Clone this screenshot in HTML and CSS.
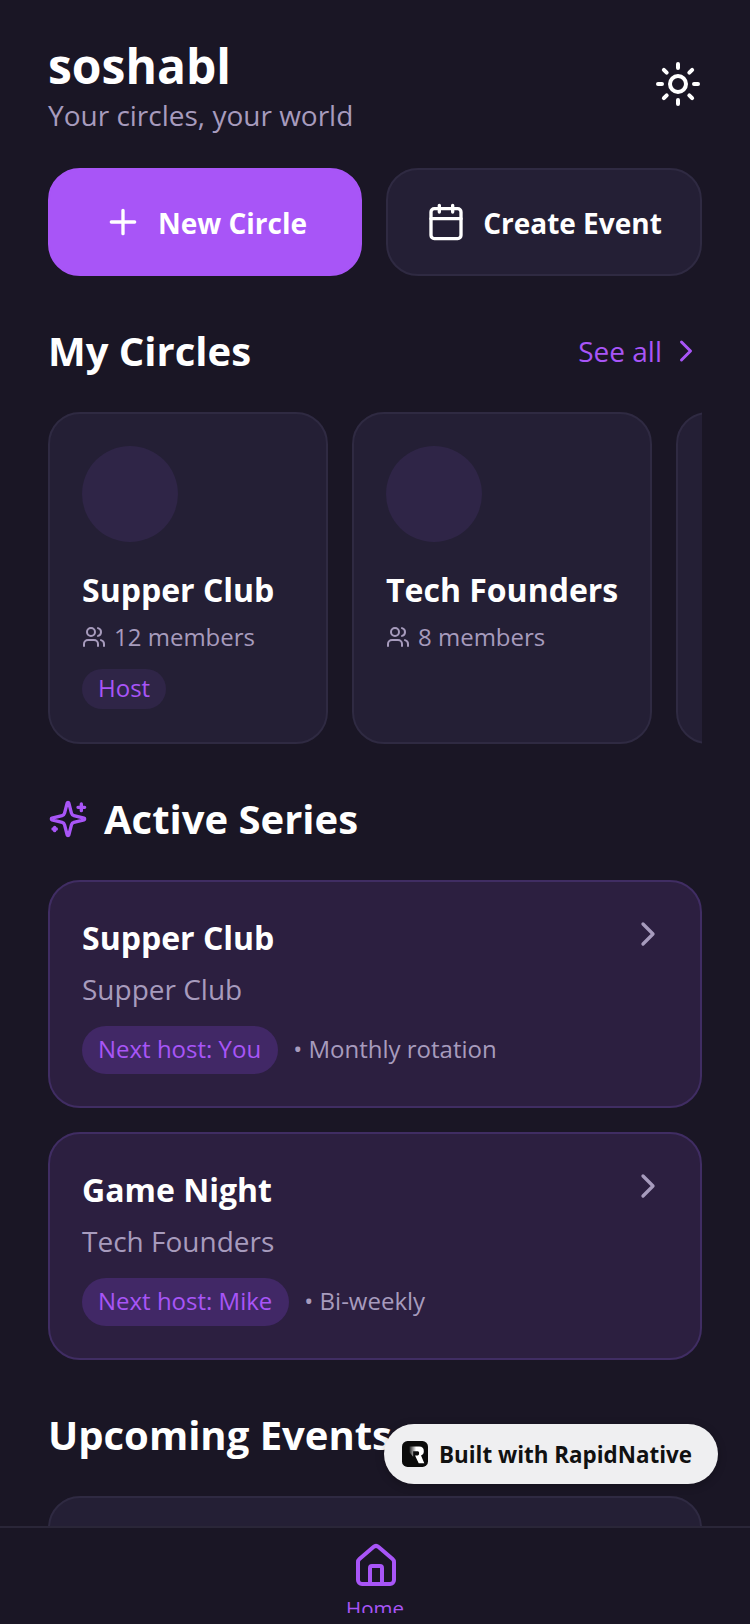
FILE: index.html
```html
<!DOCTYPE html>
<html lang="en">
<head>
  <meta charset="UTF-8" />
  <meta name="viewport" content="width=device-width, initial-scale=1.0" />
  <title>soshabl</title>
  <link rel="stylesheet" href="styles.css">
</head>
<body>
  <div class="app">
    <main class="content">
      <header class="top">
        <div>
          <h1 class="brand">soshabl</h1>
          <p class="tagline">Your circles, your world</p>
        </div>
        <svg class="sun" viewBox="0 0 24 24" fill="none" stroke="#fff" stroke-width="2" stroke-linecap="round">
          <circle cx="12" cy="12" r="4"/>
          <path d="M12 2v2M12 20v2M4.93 4.93l1.41 1.41M17.66 17.66l1.41 1.41M2 12h2M20 12h2M6.34 17.66l-1.41 1.41M19.07 4.93l-1.41 1.41"/>
        </svg>
      </header>

      <div class="actions">
        <button class="btn btn-primary">
          <svg class="btn-icon" viewBox="0 0 24 24" fill="none" stroke="#fff" stroke-width="2" stroke-linecap="round"><path d="M5 12h14M12 5v14"/></svg>
          <span>New Circle</span>
        </button>
        <button class="btn btn-dark">
          <svg class="btn-icon" viewBox="0 0 24 24" fill="none" stroke="#fff" stroke-width="2" stroke-linecap="round" stroke-linejoin="round"><path d="M8 2v4M16 2v4"/><rect x="3" y="4" width="18" height="18" rx="2"/><path d="M3 10h18"/></svg>
          <span>Create Event</span>
        </button>
      </div>

      <section class="section-head">
        <h2>My Circles</h2>
        <a class="see-all">See all
          <svg class="see-icon" viewBox="0 0 24 24" fill="none" stroke="#a855f7" stroke-width="2" stroke-linecap="round" stroke-linejoin="round"><path d="m9 18 6-6-6-6"/></svg>
        </a>
      </section>

      <div class="circles">
        <div class="circle-card">
          <div class="avatar"></div>
          <h3>Supper Club</h3>
          <p class="members">
            <svg class="members-icon" viewBox="0 0 24 24" fill="none" stroke="#a79bbd" stroke-width="2" stroke-linecap="round" stroke-linejoin="round"><path d="M16 21v-2a4 4 0 0 0-4-4H6a4 4 0 0 0-4 4v2"/><circle cx="9" cy="7" r="4"/><path d="M22 21v-2a4 4 0 0 0-3-3.87M16 3.13a4 4 0 0 1 0 7.75"/></svg>
            12 members
          </p>
          <span class="tag tag-small">Host</span>
        </div>
        <div class="circle-card circle-wide">
          <div class="avatar"></div>
          <h3>Tech Founders</h3>
          <p class="members">
            <svg class="members-icon" viewBox="0 0 24 24" fill="none" stroke="#a79bbd" stroke-width="2" stroke-linecap="round" stroke-linejoin="round"><path d="M16 21v-2a4 4 0 0 0-4-4H6a4 4 0 0 0-4 4v2"/><circle cx="9" cy="7" r="4"/><path d="M22 21v-2a4 4 0 0 0-3-3.87M16 3.13a4 4 0 0 1 0 7.75"/></svg>
            8 members
          </p>
        </div>
        <div class="circle-card"></div>
      </div>

      <section class="series-head">
        <svg class="spark" viewBox="0 0 24 24" fill="none" stroke="#a855f7" stroke-width="2" stroke-linecap="round" stroke-linejoin="round"><path d="M9.94 15.5A2 2 0 0 0 8.5 14.06l-6.14-1.58a.5.5 0 0 1 0-.96L8.5 9.94A2 2 0 0 0 9.94 8.5l1.58-6.14a.5.5 0 0 1 .96 0l1.58 6.14a2 2 0 0 0 1.44 1.44l6.14 1.58a.5.5 0 0 1 0 .96l-6.14 1.58a2 2 0 0 0-1.44 1.44l-1.58 6.14a.5.5 0 0 1-.96 0z"/><path d="M20 3v4M22 5h-4M4 17v2M5 18H3"/></svg>
        <h2>Active Series</h2>
      </section>

      <div class="series-list">
        <div class="series-card">
          <div class="series-body">
            <h3>Supper Club</h3>
            <p class="series-sub">Supper Club</p>
            <div class="series-meta">
              <span class="tag">Next host: You</span>
              <span class="series-note">• Monthly rotation</span>
            </div>
          </div>
          <svg class="series-arrow" viewBox="0 0 24 24" fill="none" stroke="#a79bbd" stroke-width="2" stroke-linecap="round" stroke-linejoin="round"><path d="m9 18 6-6-6-6"/></svg>
        </div>
        <div class="series-card">
          <div class="series-body">
            <h3>Game Night</h3>
            <p class="series-sub">Tech Founders</p>
            <div class="series-meta">
              <span class="tag">Next host: Mike</span>
              <span class="series-note">• Bi-weekly</span>
            </div>
          </div>
          <svg class="series-arrow" viewBox="0 0 24 24" fill="none" stroke="#a79bbd" stroke-width="2" stroke-linecap="round" stroke-linejoin="round"><path d="m9 18 6-6-6-6"/></svg>
        </div>
      </div>

      <h2 class="upcoming">Upcoming Events</h2>
      <div class="event-card"></div>
    </main>

    <nav class="tabbar">
      <div class="tab">
        <svg class="tab-icon" viewBox="0 0 24 24" fill="none" stroke="#a855f7" stroke-width="2" stroke-linecap="round" stroke-linejoin="round"><path d="M15 21v-8a1 1 0 0 0-1-1h-4a1 1 0 0 0-1 1v8"/><path d="M3 10a2 2 0 0 1 .71-1.53l7-6a2 2 0 0 1 2.58 0l7 6A2 2 0 0 1 21 10v9a2 2 0 0 1-2 2H5a2 2 0 0 1-2-2z"/></svg>
        <span class="tab-label">Home</span>
      </div>
    </nav>

    <div class="built">
      <svg class="built-logo" viewBox="0 0 28 28">
        <defs>
          <linearGradient id="logoFade" x1="0" y1="0" x2="1" y2="0">
            <stop offset="0" stop-color="#fff" stop-opacity="0.1"/>
            <stop offset="0.45" stop-color="#fff"/>
          </linearGradient>
        </defs>
        <rect width="28" height="28" rx="6" fill="#0b0b0b"/>
        <path d="M8 6H18.500Q23.500 6 23.500 11Q23.500 14.500 20.500 15.500L24 24H18L14 15.500H17Q18.500 15.500 18.500 13Q18.500 11 17 11H12V17L8 12z" fill="url(#logoFade)"/>
      </svg>
      <span>Built with RapidNative</span>
    </div>
  </div>
</body>
</html>
```

FILE: styles.css
```css
* {
  margin: 0;
  padding: 0;
  box-sizing: border-box;
  font-family: 'Open Sans', sans-serif;
}

body {
  background: #1a1625;
}

.app {
  position: relative;
  width: 750px;
  height: 1624px;
  overflow: hidden;
  display: flex;
  flex-direction: column;
  background: #1a1625;
}

.content {
  flex: 1;
  min-height: 0;
  overflow: hidden;
  padding: 32px 48px 0;
}

.top {
  display: flex;
  justify-content: space-between;
  align-items: center;
  height: 104px;
}

.brand {
  font-size: 48px;
  line-height: 62px;
  font-weight: 700;
  color: #fff;
}

.tagline {
  font-size: 28px;
  line-height: 36px;
  color: #a79bbd;
}

.sun {
  width: 48px;
  height: 48px;
}

.actions {
  display: flex;
  gap: 24px;
  margin-top: 32px;
}

.btn {
  flex: 1;
  height: 108px;
  border-radius: 32px;
  display: flex;
  align-items: center;
  justify-content: center;
  gap: 17px;
  font-size: 28px;
  font-weight: 700;
  color: #fff;
  border: 2px solid transparent;
}

.btn span {
  padding-top: 2px;
}

.btn-primary {
  flex: 0 0 314px;
  gap: 15px;
  background: #a855f7;
  border-color: #a855f7;
}

.btn-dark {
  background: #241f35;
  border-color: #2f2a42;
}

.btn-icon {
  width: 40px;
  height: 40px;
}

.section-head {
  display: flex;
  justify-content: space-between;
  align-items: center;
  margin-top: 47px;
  height: 56px;
}

h2 {
  font-size: 40px;
  line-height: 52px;
  font-weight: 700;
  color: #fff;
}

.see-all {
  display: flex;
  align-items: center;
  gap: 6px;
  font-size: 28px;
  color: #a855f7;
}

.see-icon {
  width: 36px;
  height: 36px;
  margin-right: -2px;
}

.circles {
  display: flex;
  gap: 24px;
  margin-top: 33px;
  overflow: hidden;
}

.circle-card {
  flex: 0 0 280px;
  height: 332px;
  padding: 32px;
  background: #241f35;
  border: 2px solid #2f2a42;
  border-radius: 32px;
}

.circle-wide {
  flex-basis: 300px;
}

.avatar {
  width: 96px;
  height: 96px;
  border-radius: 50%;
  background: #2f2547;
}

h3 {
  font-size: 32px;
  line-height: 44px;
  font-weight: 700;
  color: #fff;
  white-space: nowrap;
}

.circle-card h3 {
  margin-top: 26px;
}

.members {
  display: flex;
  align-items: center;
  gap: 8px;
  margin-top: 7px;
  font-size: 24px;
  line-height: 36px;
  color: #a79bbd;
}

.members-icon {
  width: 24px;
  height: 24px;
}

.tag {
  display: inline-block;
  padding: 5px 17px 7px 16px;
  border-radius: 24px;
  background: #412866;
  font-size: 24px;
  line-height: 36px;
  color: #a855f7;
}

.tag-small {
  margin-top: 14px;
  padding: 1px 16px 3px;
  background: #2f2547;
}

.series-head {
  display: flex;
  align-items: center;
  gap: 16px;
  margin-top: 47px;
  height: 56px;
}

.spark {
  width: 40px;
  height: 40px;
}

.series-list {
  display: flex;
  flex-direction: column;
  gap: 24px;
  margin-top: 33px;
}

.series-card {
  display: flex;
  justify-content: space-between;
  height: 228px;
  padding: 32px;
  background: #2c1f40;
  border: 2px solid #402d63;
  border-radius: 32px;
}

.series-body h3 {
  margin-top: 2px;
}

.series-sub {
  margin-top: 9px;
  font-size: 28px;
  line-height: 40px;
  color: #a79bbd;
}

.series-meta {
  display: flex;
  align-items: center;
  gap: 15px;
  margin-top: 17px;
}

.series-note {
  margin-bottom: 4px;
  font-size: 24px;
  color: #a79bbd;
}

.series-arrow {
  width: 40px;
  height: 40px;
}

.upcoming {
  margin-top: 49px;
}

.event-card {
  height: 120px;
  margin-top: 35px;
  background: #241f35;
  border: 2px solid #2f2a42;
  border-radius: 32px;
}

.tabbar {
  height: 98px;
  flex: none;
  border-top: 2px solid #2a2638;
  background: #1a1625;
  padding-top: 14px;
}

.tab {
  height: 71px;
  overflow: hidden;
  display: flex;
  flex-direction: column;
  align-items: center;
  color: #a855f7;
  font-size: 20.5px;
  line-height: 30px;
}

.tab-icon {
  width: 48px;
  height: 48px;
  flex: none;
  margin-left: 1px;
}

.tab-label {
  margin-top: 3px;
}

.built {
  position: absolute;
  left: 384px;
  top: 1424px;
  width: 334px;
  height: 60px;
  display: flex;
  align-items: center;
  gap: 11px;
  padding-left: 18px;
  border-radius: 30px;
  background: #efeff1;
  box-shadow: 0 2px 8px rgba(0, 0, 0, 0.25);
  font-size: 22.4px;
  font-weight: 700;
  color: #111;
}

.built-logo {
  width: 26px;
  height: 26px;
}
```
